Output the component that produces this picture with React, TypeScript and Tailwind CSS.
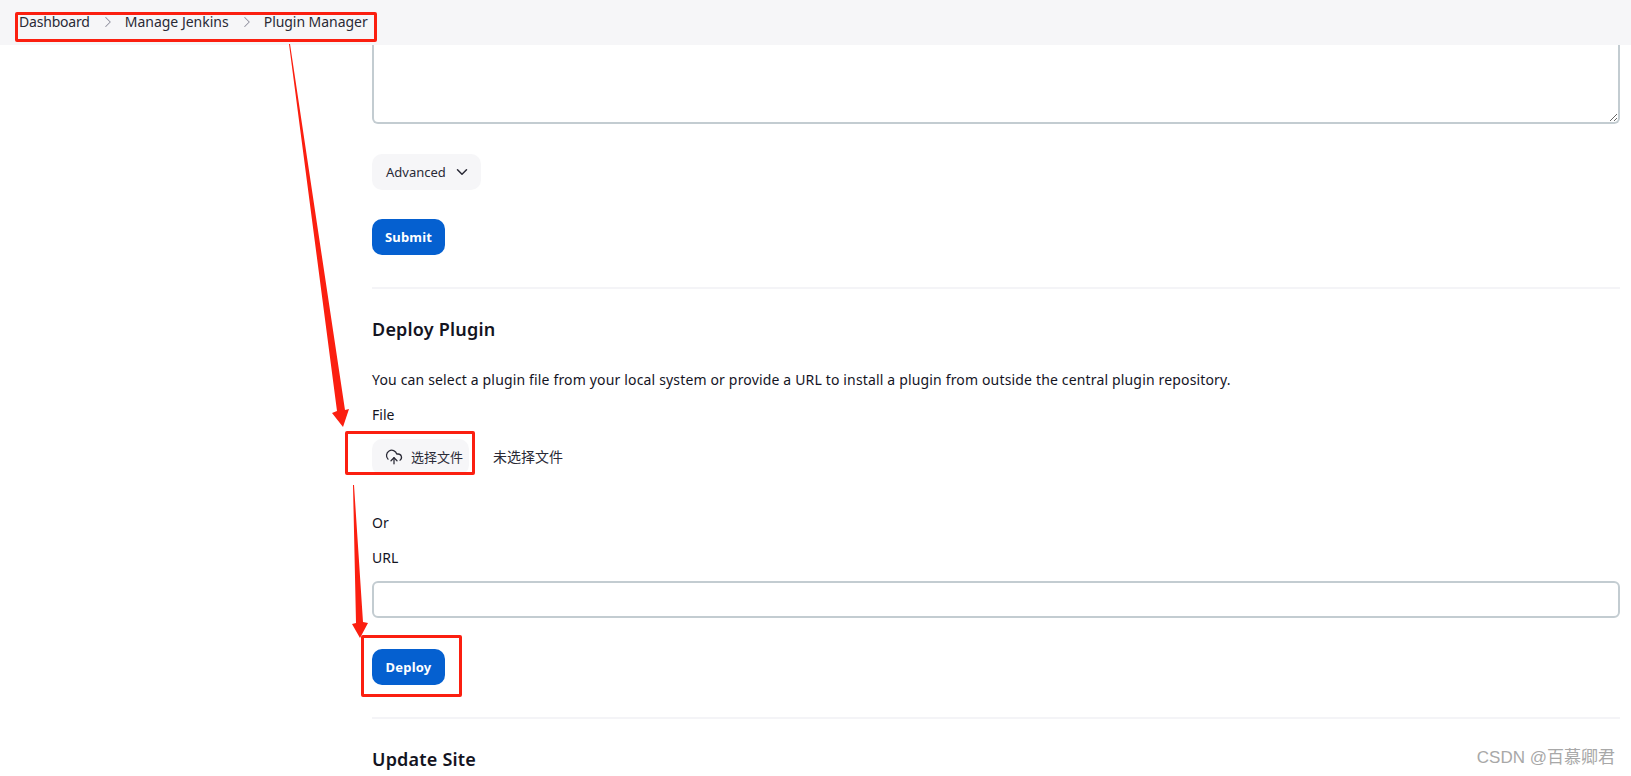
import { ChevronDown, ChevronRight, CloudUpload } from 'lucide-react'

const font = "font-['Noto_Sans','Noto_Sans_CJK_SC',sans-serif]"

function Breadcrumb() {
  return (
    <header className="h-[45px] bg-[#f6f6f8] flex items-start pt-[13px] pl-[19px] text-[14px] leading-[18px] text-[#2a2a36]">
      <span className="tracking-[-0.2px]">Dashboard</span>
      <ChevronRight className="w-[18px] h-[18px] ml-[9px] mr-[8px] text-[#8f8f9e]" strokeWidth={1.4} />
      <span>Manage Jenkins</span>
      <ChevronRight className="w-[18px] h-[18px] ml-[9px] mr-[8px] text-[#8f8f9e]" strokeWidth={1.4} />
      <span className="tracking-[-0.05px]">Plugin Manager</span>
    </header>
  )
}

function PrimaryButton({ children }: { children: string }) {
  return (
    <button className="h-[36px] w-[73px] rounded-[10px] bg-[#0560d0] text-white text-[13px] tracking-[0.2px] font-bold">
      {children}
    </button>
  )
}

function Annotations() {
  return (
    <div className="absolute inset-0 pointer-events-none">
      <div className="absolute left-[15px] top-[12px] w-[362px] h-[30px] border-[3px] border-[#fb1f10] rounded-[2px]" />
      <div className="absolute left-[345px] top-[431px] w-[130px] h-[44px] border-[3px] border-[#fb1f10] rounded-[2px]" />
      <div className="absolute left-[361px] top-[635px] w-[101px] h-[62px] border-[3px] border-[#fb1f10] rounded-[2px]" />
      <svg className="absolute inset-0" width="1631" height="776" viewBox="0 0 1631 776">
        <polygon points="289,44 290,44 345,410 349,409 343,427 332,413 337,411" fill="#fb1f10" />
        <polygon points="353,485 354,485 363,622 368,623 360,638 352,624 356,623" fill="#fb1f10" />
      </svg>
    </div>
  )
}

export default function App() {
  return (
    <div className={`relative h-[776px] w-[1631px] overflow-hidden bg-white text-[#14141f] ${font}`}>
      <Breadcrumb />
      <main className="ml-[372px] mr-[11px] text-[14px] leading-[20px]">
        <textarea className="block w-full h-[79px] border-2 border-t-0 border-[#c3ccd1] rounded-b-[6px] resize-y outline-none" />

        <button className="mt-[30px] h-[36px] w-[109px] rounded-[10px] bg-[#f6f6f8] flex items-center pl-[14px] text-[13px] text-[#2a2a36]">
          Advanced
          <ChevronDown className="w-[18px] h-[18px] ml-[7px]" strokeWidth={2} />
        </button>

        <div className="mt-[29px] flex">
          <PrimaryButton>Submit</PrimaryButton>
        </div>

        <hr className="mt-[32px] border-t-2 border-[#f4f4f7]" />

        <h2 className="mt-[28px] text-[18px] leading-[24px] font-semibold tracking-[0.2px]">Deploy Plugin</h2>

        <p className="mt-[29px] tracking-[0.16px]">
          You can select a plugin file from your local system or provide a URL to install a plugin from outside the central plugin repository.
        </p>
        <div className="mt-[15px]">File</div>

        <div className="mt-[14px] flex items-center">
          <div className="h-[36px] w-[97px] rounded-[10px] bg-[#f6f6f8] flex items-center pl-[13px] pb-[1px] text-[13px] text-[#2a2a36]">
            <CloudUpload className="w-[18px] h-[18px] mr-[8px]" strokeWidth={1.7} />
            选择文件
          </div>
          <span className="ml-[24px] text-[14px] text-[#2a2a36]">未选择文件</span>
        </div>

        <div className="mt-[38px]">Or</div>
        <div className="mt-[15px]">URL</div>

        <input className="mt-[13px] block w-full h-[37px] border-2 border-[#c3ccd1] rounded-[6px] outline-none" />

        <div className="mt-[31px] flex">
          <PrimaryButton>Deploy</PrimaryButton>
        </div>

        <hr className="mt-[32px] border-t-2 border-[#f4f4f7]" />

        <h2 className="mt-[28px] text-[18px] leading-[24px] font-semibold tracking-[0.2px]">Update Site</h2>
      </main>

      <div className="absolute right-[16px] bottom-[6px] text-[17px] leading-[24px] text-[#a8a8a8] font-['Liberation_Sans','Noto_Sans_CJK_SC',sans-serif]">
        CSDN @百慕卿君
      </div>

      <Annotations />
    </div>
  )
}
